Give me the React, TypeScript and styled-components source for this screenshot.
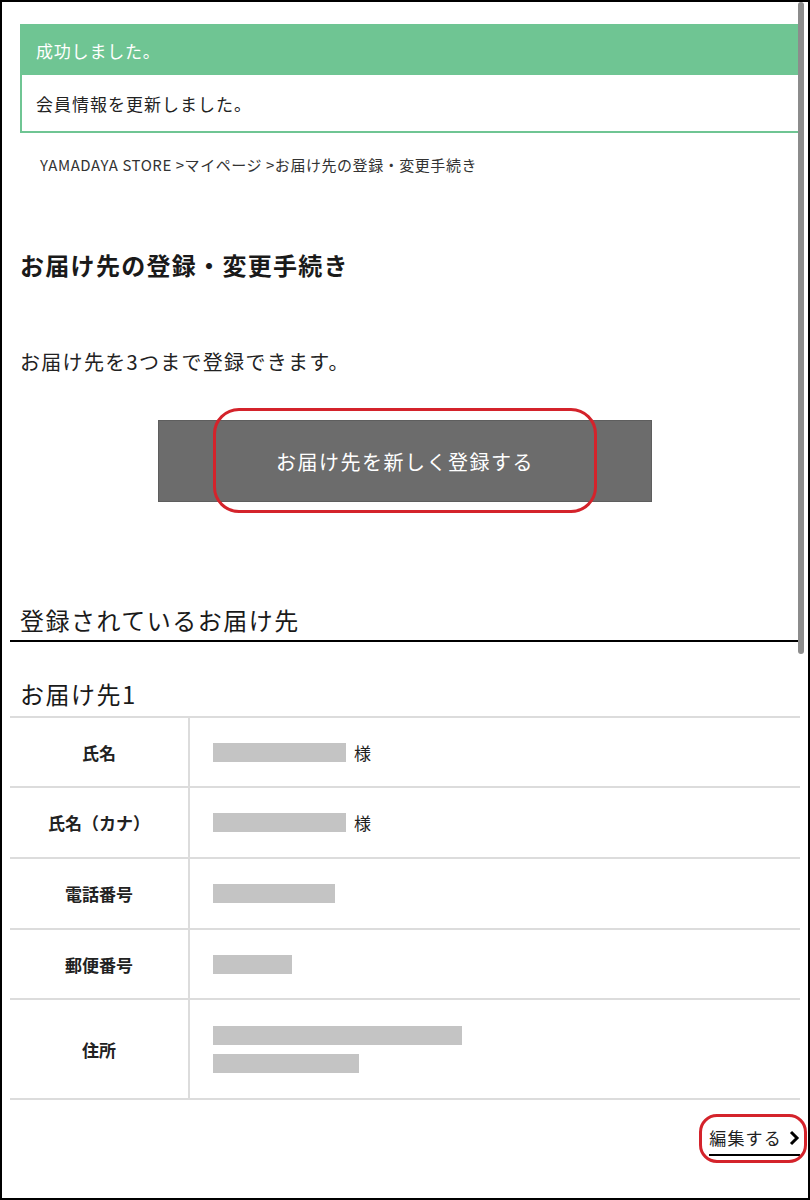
import React, { FC } from 'react';
import styled, { createGlobalStyle } from 'styled-components';

const GlobalStyle = createGlobalStyle`
  html, body {
    margin: 0;
    padding: 0;
    background: #fff;
  }
  body {
    font-family: "Noto Sans CJK JP", "Noto Sans", sans-serif;
    color: #222;
  }
`;

const Frame = styled.div`
  position: relative;
  width: 810px;
  height: 1200px;
  box-sizing: border-box;
  border: 2px solid #000;
  overflow: hidden;
  background: #fff;
`;

const Scrollbar = styled.div`
  position: absolute;
  top: 0;
  right: 4px;
  width: 6px;
  height: 652px;
  border-radius: 3px;
  background: #8c8c8c;
`;

const Content = styled.div`
  padding: 0 8px;
`;

const Alert = styled.div`
  margin: 22px 0 0 10px;
  border: 2px solid #6fc593;
`;

const AlertHead = styled.div`
  height: 49px;
  display: flex;
  align-items: center;
  padding-left: 14px;
  background: #6fc593;
  color: #fff;
  font-size: 17px;
  letter-spacing: 0.8px;
`;

const AlertBody = styled.div`
  height: 56px;
  display: flex;
  align-items: center;
  padding-left: 14px;
  font-size: 17px;
  letter-spacing: 1px;
  color: #222;
`;

const Breadcrumb = styled.div`
  margin: 22px 0 0 30px;
  font-size: 15px;
  line-height: 20px;
  color: #333;
  letter-spacing: 0.55px;
`;

const PageTitle = styled.h1`
  margin: 75px 0 0 10px;
  font-size: 24px;
  line-height: 30px;
  font-weight: 700;
  letter-spacing: 1.3px;
  color: #1a1a1a;
`;

const Lead = styled.p`
  margin: 69px 0 0 10px;
  font-size: 20px;
  line-height: 26px;
  letter-spacing: 1.3px;
  color: #222;
`;

const ButtonRow = styled.div`
  margin-top: 45px;
  display: flex;
  justify-content: center;
`;

const ButtonWrap = styled.div`
  position: relative;
`;

const PrimaryButton = styled.button`
  width: 494px;
  height: 82px;
  border: 1px solid #5e5e5e;
  background: #6c6c6c;
  color: #fff;
  font-family: inherit;
  font-size: 20px;
  letter-spacing: 1.5px;
  cursor: pointer;
`;

const Ring = styled.div<{ $left: number; $top: number; $w: number; $h: number; $r: number }>`
  position: absolute;
  left: ${(p) => p.$left}px;
  top: ${(p) => p.$top}px;
  width: ${(p) => p.$w}px;
  height: ${(p) => p.$h}px;
  box-sizing: border-box;
  border: 3px solid #d4232b;
  border-radius: ${(p) => p.$r}px;
  pointer-events: none;
`;

const SectionTitle = styled.h2`
  margin: 103px 0 0 0;
  padding: 0 0 5px 10px;
  font-size: 24px;
  line-height: 30px;
  font-weight: 400;
  letter-spacing: 1.5px;
  color: #1a1a1a;
  border-bottom: 2px solid #000;
`;

const SubTitle = styled.h3`
  margin: 37px 0 7px 10px;
  font-size: 24px;
  line-height: 30px;
  font-weight: 400;
  letter-spacing: 1.5px;
  color: #1a1a1a;
`;

const Table = styled.div`
  border-top: 2px solid #dcdcdc;
`;

const Row = styled.div<{ $h: number }>`
  display: grid;
  grid-template-columns: 180px 1fr;
  box-sizing: border-box;
  height: ${(p) => p.$h}px;
  border-bottom: 2px solid #dcdcdc;
`;

const Label = styled.div`
  display: flex;
  align-items: center;
  justify-content: center;
  border-right: 2px solid #dcdcdc;
  font-size: 17px;
  font-weight: 700;
  color: #222;
`;

const Value = styled.div`
  display: flex;
  flex-direction: column;
  justify-content: center;
  gap: 9px;
  padding-left: 23px;
`;

const ValueLine = styled.div`
  display: flex;
  align-items: center;
  gap: 8px;
  font-size: 17px;
  color: #222;
`;

const Masked = styled.span<{ $w: number }>`
  display: block;
  width: ${(p) => p.$w}px;
  height: 19px;
  background: #c4c4c4;
`;

const Footer = styled.div`
  display: flex;
  justify-content: flex-end;
  margin-top: 26px;
`;

const EditWrap = styled.div`
  position: relative;
`;

const EditLink = styled.a`
  display: flex;
  align-items: center;
  gap: 6px;
  padding-bottom: 4px;
  border-bottom: 2px solid #000;
  font-size: 17px;
  line-height: 24px;
  letter-spacing: 1.2px;
  color: #222;
  text-decoration: none;
  cursor: pointer;
`;

const Chevron = () => (
  <svg width="12" height="16" viewBox="0 0 12 16">
    <path d="M3 2 L9 8 L3 14" fill="none" stroke="#000" strokeWidth="3" strokeLinejoin="miter" />
  </svg>
);

type Field = { label: string; bars: number[]; suffix?: string; h: number };

const fields: Field[] = [
  { label: '氏名', bars: [133], suffix: '様', h: 70 },
  { label: '氏名（カナ）', bars: [133], suffix: '様', h: 71 },
  { label: '電話番号', bars: [122], h: 71 },
  { label: '郵便番号', bars: [79], h: 70 },
  { label: '住所', bars: [249, 146], h: 100 },
];

const App: FC = () => (
  <>
    <GlobalStyle />
    <Frame>
      <Content>
        <Alert>
          <AlertHead>成功しました。</AlertHead>
          <AlertBody>会員情報を更新しました。</AlertBody>
        </Alert>
        <Breadcrumb>YAMADAYA STORE &gt;マイページ &gt;お届け先の登録・変更手続き</Breadcrumb>
        <PageTitle>お届け先の登録・変更手続き</PageTitle>
        <Lead>お届け先を3つまで登録できます。</Lead>
        <ButtonRow>
          <ButtonWrap>
            <PrimaryButton>お届け先を新しく登録する</PrimaryButton>
            <Ring $left={55} $top={-12} $w={384} $h={105} $r={26} />
          </ButtonWrap>
        </ButtonRow>
        <SectionTitle>登録されているお届け先</SectionTitle>
        <SubTitle>お届け先1</SubTitle>
        <Table>
          {fields.map((f) => (
            <Row key={f.label} $h={f.h}>
              <Label>{f.label}</Label>
              <Value>
                {f.bars.map((w, i) => (
                  <ValueLine key={i}>
                    <Masked $w={w} />
                    {f.suffix}
                  </ValueLine>
                ))}
              </Value>
            </Row>
          ))}
        </Table>
        <Footer>
          <EditWrap>
            <EditLink>
              編集する
              <Chevron />
            </EditLink>
            <Ring $left={-10} $top={-12} $w={108} $h={49} $r={18} />
          </EditWrap>
        </Footer>
      </Content>
      <Scrollbar />
    </Frame>
  </>
);

export default App;
